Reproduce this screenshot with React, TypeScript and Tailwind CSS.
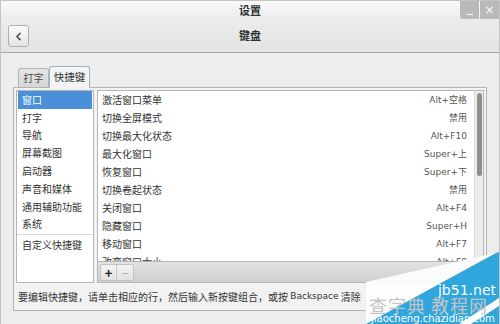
import { ChevronLeft } from "lucide-react";

const CATEGORIES = ["窗口", "打字", "导航", "屏幕截图", "启动器", "声音和媒体", "通用辅助功能", "系统"];

const SHORTCUTS = [
  { name: "激活窗口菜单", key: "Alt+空格" },
  { name: "切换全屏模式", key: "禁用" },
  { name: "切换最大化状态", key: "Alt+F10" },
  { name: "最大化窗口", key: "Super+上" },
  { name: "恢复窗口", key: "Super+下" },
  { name: "切换卷起状态", key: "禁用" },
  { name: "关闭窗口", key: "Alt+F4" },
  { name: "隐藏窗口", key: "Super+H" },
  { name: "移动窗口", key: "Alt+F7" },
  { name: "改变窗口大小", key: "Alt+F8" },
];

function Watermark() {
  return (
    <div className="absolute right-0 bottom-0 w-[160px] h-[72px] pointer-events-none">
      <svg width="160" height="72" viewBox="0 0 160 72" className="absolute inset-0">
        <polygon points="27,30 157,1 27,72" fill="#ffffff" opacity="0.9" />
        <polygon points="157,1 160,0 160,72 27,72" fill="#2fa6dc" />
        <polygon points="120,72 160,46 160,54 132,72" fill="#ffffff" />
      </svg>
      <div className="absolute right-[3px] top-[31px] text-[14px] leading-none text-white font-['DejaVu_Sans',sans-serif]">
        jb51.net
      </div>
      <div className="absolute left-[30px] top-[44px] text-[18px] leading-none text-[#c4c4c4] tracking-[1px] font-['Noto_Sans_CJK_SC',sans-serif] whitespace-nowrap">
        查字典 教程网
      </div>
      <div className="absolute left-[32px] top-[62px] text-[10px] leading-none text-white font-['DejaVu_Sans',sans-serif] whitespace-nowrap">
        jiaocheng.chazidian.com
      </div>
    </div>
  );
}

export default function App() {
  return (
    <div className="relative w-[500px] h-[324px] overflow-hidden bg-[#ededed] border-x border-[#c4c4c4] text-[#2e3436] font-['Noto_Sans_CJK_SC','Noto_Sans',sans-serif]">
      {/* Title bar */}
      <div className="relative h-[19px] flex items-center justify-center bg-gradient-to-b from-[#fafafa] to-[#ececec] border-t border-[#c4c4c4]">
        <span className="text-[11px] font-bold leading-none">设置</span>
        <div className="absolute right-0 top-0 flex">
          <div className="w-[19px] h-[18px] bg-[#b9b9b9] rounded-bl-[3px] flex items-end justify-center pb-[4px]">
            <div className="w-[6px] h-[1px] bg-white" />
          </div>
          <div className="w-[19px] h-[18px] bg-[#b9b9b9] ml-[1px] flex items-center justify-center text-white text-[12px] leading-none font-['DejaVu_Sans',sans-serif]">
            ×
          </div>
        </div>
      </div>

      {/* Header bar */}
      <div className="relative h-[34px] flex items-center justify-center bg-gradient-to-b from-[#ececec] to-[#e4e4e4] border-b border-[#a8a8a8]">
        <button className="absolute left-[7px] top-[6px] w-[21px] h-[22px] rounded-[3px] border border-[#b0b0b0] bg-gradient-to-b from-[#fbfbfb] to-[#e4e4e4] flex items-center justify-center">
          <ChevronLeft size={13} strokeWidth={2.5} color="#3c3c3c" />
        </button>
        <span className="text-[11px] font-bold leading-none">键盘</span>
      </div>

      {/* Content */}
      <div className="px-[12px] pt-[12px]">
        {/* Tabs */}
        <div className="flex items-end h-[22px] pl-[5px]">
          <div className="h-[19px] w-[31px] flex items-center justify-center border border-b-0 border-[#b4b4b4] rounded-t-[3px] bg-gradient-to-b from-[#e6e6e6] to-[#d6d6d6] text-[10px] leading-none text-[#444]">
            打字
          </div>
          <div className="relative h-[22px] w-[41px] flex items-center justify-center border border-b-0 border-[#9cb5cf] rounded-t-[3px] bg-[#f4f4f4] text-[10.5px] leading-none -mb-[1px] z-10">
            快捷键
          </div>
        </div>

        {/* Notebook panel */}
        <div className="h-[224px] border border-[#b4b4b4] bg-[#f2f2f2] flex flex-col">
          <div className="flex gap-[3px] px-[2px] pt-[2px] h-[195px]">
            {/* Categories */}
            <div className="w-[78px] bg-white border border-[#b6b6b6] text-[10px] leading-none">
              {CATEGORIES.map((c, i) => (
                <div
                  key={c}
                  className={`h-[17.8px] flex items-center whitespace-nowrap ${
                    i === 0 ? "bg-[#4a90d9] text-white mx-[1px] pl-[4px]" : "text-[#333] pl-[5px]"
                  }`}
                >
                  {c}
                </div>
              ))}
              <div className="h-[1px] bg-[#d8d8d8] my-[1px]" />
              <div className="h-[18px] flex items-center pl-[5px] text-[#333] whitespace-nowrap">自定义快捷键</div>
            </div>

            {/* Shortcut list */}
            <div className="flex-1 border border-[#b6b6b6] flex flex-col">
              <div className="relative h-[170px] bg-white overflow-hidden">
                {SHORTCUTS.map((s) => (
                  <div key={s.name} className="h-[18px] flex items-center justify-between pl-[4px] pr-[16px] text-[10px] leading-none">
                    <span className="text-[#333]">{s.name}</span>
                    <span className="text-[#555] font-['DejaVu_Sans','Noto_Sans_CJK_SC',sans-serif] text-[9px]">{s.key}</span>
                  </div>
                ))}
                {/* Scrollbar */}
                <div className="absolute right-0 top-0 bottom-0 w-[9px] bg-[#ececec] border-l border-[#dcdcdc]">
                  <div className="mx-auto mt-[2px] w-[5px] h-[83px] rounded-[3px] bg-[#8e8e8e]" />
                </div>
              </div>
              <div className="flex-1 bg-gradient-to-b from-[#e3e3e3] to-[#cfcfcf] border-t border-[#b6b6b6] flex items-center pl-[2px]">
                <div className="flex h-[17px] border border-[#c2c2c2] rounded-[2px] bg-gradient-to-b from-[#f4f4f4] to-[#e2e2e2]">
                  <div className="w-[16px] flex items-center justify-center text-[13px] leading-none font-bold text-[#222] border-r border-[#c8c8c8]">+</div>
                  <div className="w-[16px] flex items-center justify-center text-[13px] leading-none text-[#aaa]">−</div>
                </div>
              </div>
            </div>
          </div>
          <div className="flex-1 flex items-center pl-[4px] text-[10px] leading-none text-[#333] whitespace-nowrap">
            要编辑快捷键，请单击相应的行，然后输入新按键组合，或按&nbsp;<span className="font-['DejaVu_Sans',sans-serif] text-[9px]">Backspace</span>&nbsp;清除
          </div>
        </div>
      </div>

      <Watermark />
    </div>
  );
}
